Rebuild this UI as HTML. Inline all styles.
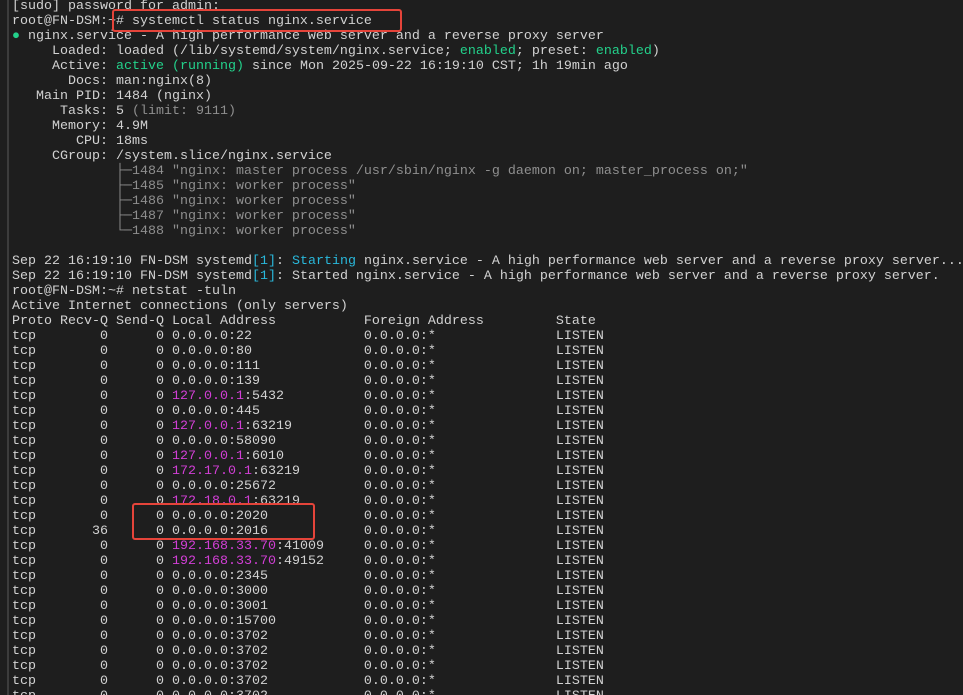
<!DOCTYPE html>
<html><head><meta charset="utf-8"><style>
html,body{margin:0;padding:0;background:#1e1e1e;width:963px;height:695px;overflow:hidden;position:relative}
.bar{position:absolute;left:7px;top:0;width:2px;height:695px;background:#3c3c3c}
pre{position:absolute;left:12px;top:-1px;margin:0;font-family:"Liberation Mono",monospace;font-size:13.33px;line-height:15px;color:#d2d2d2;white-space:pre}
.g{color:#23d18b}.d{color:#8f8f8f}.c{color:#29b8db}.m{color:#d23fd6}
.box{position:absolute;border:2px solid #e5443a;border-radius:3px}
</style></head><body>
<div class="bar"></div>
<pre>[sudo] password for admin:
root@FN-DSM:~# systemctl status nginx.service
<span class="g">●</span> nginx.service - A high performance web server and a reverse proxy server
     Loaded: loaded (/lib/systemd/system/nginx.service; <span class="g">enabled</span>; preset: <span class="g">enabled</span>)
     Active: <span class="g">active (running)</span> since Mon 2025-09-22 16:19:10 CST; 1h 19min ago
       Docs: man:nginx(8)
   Main PID: 1484 (nginx)
      Tasks: 5 <span class="d">(limit: 9111)</span>
     Memory: 4.9M
        CPU: 18ms
     CGroup: /system.slice/nginx.service
<span class="d">             ├─1484 "nginx: master process /usr/sbin/nginx -g daemon on; master_process on;"
             ├─1485 "nginx: worker process"
             ├─1486 "nginx: worker process"
             ├─1487 "nginx: worker process"
             └─1488 "nginx: worker process"</span>

Sep 22 16:19:10 FN-DSM systemd<span class="c">[1]</span>: <span class="c">Starting</span> nginx.service - A high performance web server and a reverse proxy server...
Sep 22 16:19:10 FN-DSM systemd<span class="c">[1]</span>: Started nginx.service - A high performance web server and a reverse proxy server.
root@FN-DSM:~# netstat -tuln
Active Internet connections (only servers)
Proto Recv-Q Send-Q Local Address           Foreign Address         State
tcp        0      0 0.0.0.0:22              0.0.0.0:*               LISTEN
tcp        0      0 0.0.0.0:80              0.0.0.0:*               LISTEN
tcp        0      0 0.0.0.0:111             0.0.0.0:*               LISTEN
tcp        0      0 0.0.0.0:139             0.0.0.0:*               LISTEN
tcp        0      0 <span class="m">127.0.0.1</span>:5432          0.0.0.0:*               LISTEN
tcp        0      0 0.0.0.0:445             0.0.0.0:*               LISTEN
tcp        0      0 <span class="m">127.0.0.1</span>:63219         0.0.0.0:*               LISTEN
tcp        0      0 0.0.0.0:58090           0.0.0.0:*               LISTEN
tcp        0      0 <span class="m">127.0.0.1</span>:6010          0.0.0.0:*               LISTEN
tcp        0      0 <span class="m">172.17.0.1</span>:63219        0.0.0.0:*               LISTEN
tcp        0      0 0.0.0.0:25672           0.0.0.0:*               LISTEN
tcp        0      0 <span class="m">172.18.0.1</span>:63219        0.0.0.0:*               LISTEN
tcp        0      0 0.0.0.0:2020            0.0.0.0:*               LISTEN
tcp       36      0 0.0.0.0:2016            0.0.0.0:*               LISTEN
tcp        0      0 <span class="m">192.168.33.70</span>:41009     0.0.0.0:*               LISTEN
tcp        0      0 <span class="m">192.168.33.70</span>:49152     0.0.0.0:*               LISTEN
tcp        0      0 0.0.0.0:2345            0.0.0.0:*               LISTEN
tcp        0      0 0.0.0.0:3000            0.0.0.0:*               LISTEN
tcp        0      0 0.0.0.0:3001            0.0.0.0:*               LISTEN
tcp        0      0 0.0.0.0:15700           0.0.0.0:*               LISTEN
tcp        0      0 0.0.0.0:3702            0.0.0.0:*               LISTEN
tcp        0      0 0.0.0.0:3702            0.0.0.0:*               LISTEN
tcp        0      0 0.0.0.0:3702            0.0.0.0:*               LISTEN
tcp        0      0 0.0.0.0:3702            0.0.0.0:*               LISTEN
tcp        0      0 0.0.0.0:3702            0.0.0.0:*               LISTEN</pre>
<div class="box" style="left:112px;top:9px;width:286px;height:19px"></div>
<div class="box" style="left:132px;top:503px;width:179px;height:33px"></div>
</body></html>
